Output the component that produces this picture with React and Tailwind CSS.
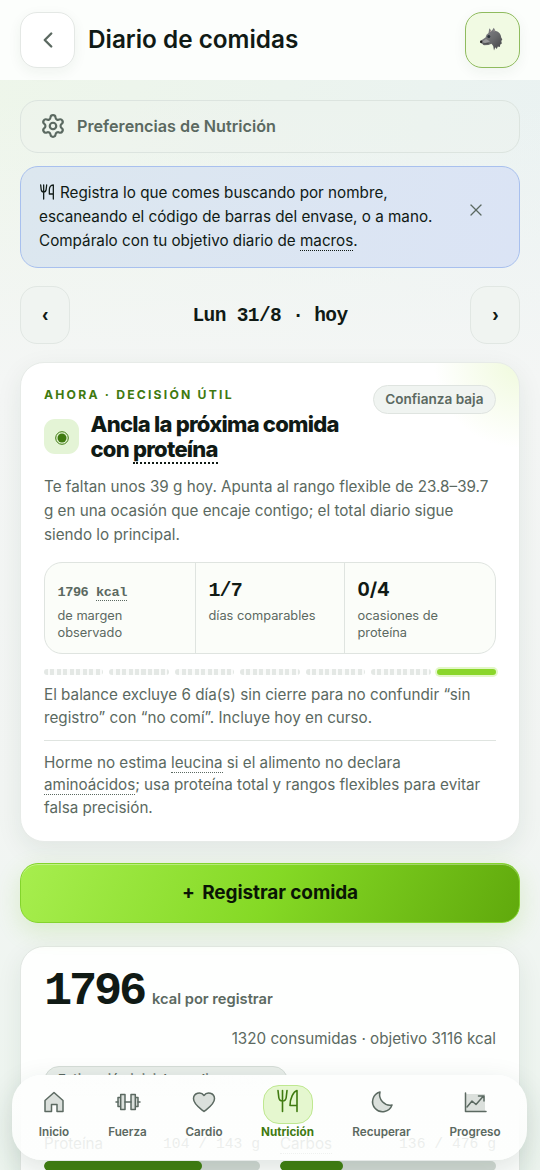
import React from 'react';
import clsx from 'clsx';
import { ChevronLeft, Settings, X } from 'lucide-react';

const MONO = "font-['Liberation_Mono',monospace]";

const WolfIcon = () => (
  <svg className="mr-[4px] mb-[2px]" width="24" height="24" viewBox="0 0 24 24">
    <defs>
      <linearGradient id="fur" x1="0" y1="0" x2="1" y2="1">
        <stop offset="0" stopColor="#8b8b91" />
        <stop offset=".55" stopColor="#68696c" />
        <stop offset="1" stopColor="#3f4042" />
      </linearGradient>
    </defs>
    <path d="M9.500 6 10.300 1.300 12.700 4 14.800.8 16.500 4C20 4.500 22 7.500 22.200 10.500L23.300 12.500 22.300 14 22.800 16.500 21.300 17.500 20.800 20 18.800 19.500 17.800 22 16.300 20.300 15 23.500 14.200 19 12.500 16.800 9.500 18 5 18.200 3 16.800 1.200 15.800 1.300 14 6.500 10.500 7.500 7.800Z" fill="url(#fur)" />
    <path d="M10.800 5 11.100 2.700 12.500 4.800zM14.500 4.300 15.100 2.200 15.700 4.500z" fill="#b0a0a0" />
    <path d="M7 12 2.800 14.800 6 16 11 14.500z" fill="#9a9a9c" />
    <circle cx="9.800" cy="9.600" r="1.500" fill="#28313a" />
    <circle cx="2.200" cy="14.800" r="1.200" fill="#222" />
    <path d="M4 17 9.500 16.500" stroke="#3b3b3d" strokeWidth=".7" />
  </svg>
);

// fork and knife, shared by the hint and the tab bar
const Cutlery = ({ className, sw, knife }) => (
  <svg className={className} viewBox="0 0 22 24" fill="none" stroke="currentColor" strokeWidth={sw} strokeLinecap="round" strokeLinejoin="round">
    <path d="M1.500 1.500 2.300 8.500c.3 2.300 1.700 3.500 3.700 3.500s3.400-1.200 3.700-3.500l.8-7M6 1.500V22.500" />
    <path d={knife} />
  </svg>
);

const StatCell = ({ label, children, last }) => (
  <div className={clsx('pl-[12.500px] pt-[14px] text-[12.800px] leading-[16.500px] text-[#5b6961]', !last && 'border-r border-[#dfe4e0]')}>
    <div className={clsx(MONO, 'h-[31px] font-bold leading-[28px]')}>{children}</div>
    <p className="whitespace-pre-line">{label}</p>
  </div>
);

const Term = ({ children }) => (
  <span className="border-b-2 border-dotted border-current">{children}</span>
);

const ThinTerm = ({ children }) => (
  <span className="border-b border-dotted border-current">{children}</span>
);

const tabs = [
  {
    label: 'Inicio',
    width: 'w-[84px]',
    icon: <path d="M3 10.500 12 2.500l9 8V21.500h-6v-7H9.500v7H3z" />,
  },
  {
    label: 'Fuerza',
    width: 'w-[63px]',
    icon: (
      <>
        <path d="M2 7.500H4.700v9H2zM22 7.500h-2.700v9H22z" />
        <path d="M4.700 4.500H9v15H4.700zM15 4.500h4.300v15H15z" />
        <path d="M9 12h6M0 12h2M22 12h2" />
      </>
    ),
  },
  {
    label: 'Cardio',
    width: 'w-[90px]',
    icon: <path d="M12 21.500C8 18.300 1.500 14.300 1.500 8.800 1.500 2.800 9 1.200 12 5.500c3-4.300 10.500-2.700 10.500 3.300 0 5.500-6.500 9.500-10.500 12.700z" />,
  },
  { label: 'Nutrición', width: 'w-[77px]', active: true },
  {
    label: 'Recuperar',
    width: 'w-[111px]',
    icon: <path d="M10 2A10 10 0 1 0 22 15 10.500 10.500 0 0 1 10 2z" />,
  },
  {
    label: 'Progreso',
    width: 'w-[76px]',
    icon: (
      <>
        <path d="M3 4h19v17H3z" stroke="none" />
        <path d="M2.500 3v18.500H23" fill="none" />
        <path d="m4 17 5-6 4 3.500L20.500 6M15.500 6H21v5" fill="none" />
      </>
    ),
  },
];

const TabBar = () => (
  <nav className="absolute left-[12px] top-[1075px] z-20 flex h-[85px] w-[515px] rounded-[30px] bg-[linear-gradient(180deg,rgba(253,254,253,1)_0%,rgba(253,254,253,0.98)_40%,rgba(253,254,253,0.88)_75%,rgba(253,254,253,0.93)_100%)] shadow-[0_10px_30px_rgba(30,60,40,0.14)]">
    {tabs.map((tab) => (
      <div key={tab.label} className={clsx(tab.width, 'flex flex-col items-center pt-[10px]')}>
        <div
          className={clsx(
            'flex h-[39px] w-[50px] items-center justify-center rounded-[16px]',
            tab.active ? 'border border-[#bfe890] bg-[#e5f7cf] text-[#3f7a10]' : 'pb-[6px] text-[#5b6961]'
          )}
        >
          {tab.active ? (
            <Cutlery className="mb-[7px] h-[24px] w-[23px]" sw={1.6} knife="M20.500 22.500V1.500C17 2.500 13.500 9 13.500 16.500h7" />
          ) : (
            <svg className="overflow-visible" width="24" height="24" viewBox="0 0 24 24" fill="#dbe0dc" stroke="currentColor" strokeWidth="1.5" strokeLinejoin="round" strokeLinecap="round">
              {tab.icon}
            </svg>
          )}
        </div>
        <span className={clsx('text-[11.700px] leading-[16px]', tab.active ? 'font-bold text-[#3f7a10]' : 'font-semibold text-[#5b6961]')}>
          {tab.label}
        </span>
      </div>
    ))}
  </nav>
);

const Header = () => (
  <header className="flex h-20 items-center bg-[#fcfefc] px-5">
    <button className="flex h-[56px] w-[55px] items-center justify-center rounded-[17px] border border-[#e4e8e5] bg-white shadow-[0_4px_14px_rgba(30,60,40,0.06)]">
      <ChevronLeft size={26} strokeWidth={2.2} className="text-[#5b6961]" />
    </button>
    <h1 className="mb-[1px] ml-[13px] text-[24.300px] font-semibold text-[#101a15]">Diario de comidas</h1>
    <button className="ml-auto flex h-[56px] w-[55px] items-center justify-center rounded-[17px] border border-[#8fbb5e] bg-[#f1fae3] shadow-[0_4px_14px_rgba(30,60,40,0.06)]">
      <WolfIcon />
    </button>
  </header>
);

const DecisionCard = () => (
  <section className="mt-[18px] h-[480px] rounded-[24px] border border-[#e7ebe8] bg-white bg-[radial-gradient(circle_at_100%_0%,#f0fadd_0px,rgba(255,255,255,0)_85px)] px-[23px] shadow-[0_8px_26px_rgba(30,60,40,0.08)]">
    <div className="flex h-[51px] justify-between pt-[22px]">
      <p className="pt-px text-[12.200px] font-bold leading-[18px] tracking-[2.200px] text-[#3f7a10]">AHORA · DECISIÓN ÚTIL</p>
      <span className="flex h-[29px] items-center rounded-full border border-[#dfe4e0] bg-[#f0f4f1] px-[11.500px] pb-px text-[13.600px] font-semibold text-[#5b6961]">
        Confianza baja
      </span>
    </div>
    <div className="-mt-[2px] flex items-center">
      <div className="-mt-px flex h-[35px] w-[35px] items-center justify-center rounded-[11px] bg-[#e4f4d6]">
        <svg className="mt-[3px]" width="14" height="14" viewBox="0 0 14 14">
          <circle cx="7" cy="7" r="6.300" fill="none" stroke="#3f7a10" strokeWidth="1" />
          <circle cx="7" cy="7" r="4.500" fill="#3f7a10" />
        </svg>
      </div>
      <h2 className="ml-[11.500px] text-[22px] font-extrabold leading-[25px] tracking-[-0.760px] text-[#101a15]">
        Ancla la próxima comida
        <br />
        con <Term>proteína</Term>
      </h2>
    </div>
    <p className="mt-[13px] whitespace-nowrap text-[15.220px] leading-[24px] text-[#5b6961]">
      Te faltan unos 39 g hoy. Apunta al rango flexible de 23.8–39.7
      <br />g en una ocasión que encaje contigo; el total diario sigue
      <br />
      siendo lo principal.
    </p>
    <div className="mt-[15px] grid h-[92px] grid-cols-[151px_149px_1fr] rounded-[18px] border border-[#dfe4e0] bg-[#fbfdf9]">
      <StatCell label={'de margen\nobservado'}>
        <span className="relative top-[2px] text-[13.600px] tracking-[-0.450px]">
          1796 <ThinTerm>kcal</ThinTerm>
        </span>
      </StatCell>
      <StatCell label="días comparables">
        <span className="text-[20px] tracking-[-0.900px] text-[#101a15]">1/7</span>
      </StatCell>
      <StatCell label={'ocasiones de\nproteína'} last>
        <span className="relative -top-px font-['Inter',sans-serif] text-[19px] tabular-nums text-[#101a15]">0/4</span>
      </StatCell>
    </div>
    <div className="mt-[15px] grid h-[6px] grid-cols-7 gap-[6px]">
      {[1, 2, 3, 4, 5, 6].map((day) => (
        <div key={day} className="rounded-full bg-[repeating-linear-gradient(90deg,#e4e8e5_0px,#e4e8e5_4px,#fafbfa_4px,#fafbfa_6.500px)]" />
      ))}
      <div className="rounded-full bg-[#8ad62a] shadow-[0_0_0_2px_#e3f7c8]" />
    </div>
    <p className="mt-[9px] whitespace-nowrap text-[15.220px] leading-[22.500px] text-[#5b6961]">
      El balance excluye 6 día(s) sin cierre para no confundir “sin
      <br />
      registro” con “no comí”. Incluye hoy en curso.
    </p>
    <p className="mt-[11px] whitespace-nowrap border-t border-[#dfe4e0] pt-[11px] text-[15.220px] leading-[22.300px] text-[#5b6961]">
      Horme no estima <ThinTerm>leucina</ThinTerm> si el alimento no declara
      <br />
      <ThinTerm>aminoácidos</ThinTerm>; usa proteína total y rangos flexibles para evitar
      <br />
      falsa precisión.
    </p>
  </section>
);

const Macro = ({ name, value, bar, className }) => (
  <div className={className}>
    <div className="flex h-[18px] justify-between text-[15.200px] leading-[18px] text-[#5b6961]">
      <span>{name}</span>
      <span className={clsx(MONO, 'text-[14.700px]')}>{value}</span>
    </div>
    <div className="mt-[8px] h-[10px] overflow-hidden rounded-full bg-[#d3dbd5]">
      <div className={clsx('h-full rounded-full bg-[#418010]', bar)} />
    </div>
  </div>
);

const SummaryCard = () => (
  <section className="mt-[23px] h-[300px] rounded-t-[24px] border border-[#e2e7e3] bg-[#fefffe] px-[23px] pt-[20px] shadow-[0_8px_26px_rgba(30,60,40,0.08)]">
    <div className="flex h-[50px] items-baseline text-[#5b6961]">
      <span className={clsx(MONO, 'w-[100px] whitespace-nowrap text-[47px] font-bold leading-[50px] tracking-[-3.200px] text-[#101a15]')}>1796</span>
      <span className="ml-[8px] text-[14.700px] font-semibold">kcal por registrar</span>
    </div>
    <p className="mt-[10px] text-right text-[15.220px] leading-[24px] text-[#5b6961]">1320 consumidas · objetivo 3116 kcal</p>
    <div className="mt-[15px] flex h-[30px] w-[244px] items-center justify-center rounded-full border border-[#d5ddd7] bg-[#e9eeea] pb-[2px] text-[13px] font-semibold text-[#5b6961]">
      Estimación inicial · media en curso
    </div>
    <div className="mt-[39px] flex">
      <Macro name="Proteína" value="104 / 143 g" bar="w-[158px]" className="w-[216px]" />
      <Macro name={<ThinTerm>Carbos</ThinTerm>} value="136 / 476 g" bar="w-[63px]" className="ml-[20px] w-[216px]" />
    </div>
  </section>
);

export default function App() {
  return (
    <div className="relative h-[1170px] w-[540px] overflow-hidden bg-[#f2f6f4] bg-[linear-gradient(100deg,#eef6ea_0%,#e9f1f4_100%)] font-['Inter',sans-serif]">
      <div className="h-full bg-[linear-gradient(180deg,rgba(245,247,245,0)_100px,#f4f6f5_380px,#f2f5f3_800px,#edf5ef_1170px)]">
        <Header />
        <main className="px-5 pt-5">
          <button className="flex h-[53px] w-full items-center gap-[11px] rounded-[18px] border border-[#dce4df] bg-[#edf2ee]/40 pb-px pl-[19px] text-[16.200px] font-semibold text-[#5b6961]">
            <Settings size={26} strokeWidth={2} />
            Preferencias de Nutrición
          </button>

          <div className="mt-[13px] flex h-[102px] justify-between rounded-[18px] border border-[#a8c0ee] bg-[linear-gradient(100deg,#dce7ef,#dbe4f5)] pl-[18px] pr-[36px] pt-[14px] text-[#101a15]">
            <p className="whitespace-nowrap text-[15.240px] leading-[24px]">
              <Cutlery className="mr-[5px] inline h-[16px] w-[16px] align-[-2px]" sw={1.9} knife="M20.500 22.500V1.500C16.500 1.500 14.500 4.500 14.500 9v6h6" />
              Registra lo que comes buscando por nombre,
              <br />
              escaneando el código de barras del envase, o a mano.
              <br />
              Compáralo con tu objetivo diario de <ThinTerm>macros</ThinTerm>.
            </p>
            <X size={20} strokeWidth={1.500} className="-mr-[3px] mt-[19px] text-[#5b6961]" />
          </div>

          <div className={clsx(MONO, 'mt-[18px] flex h-[58px] items-center justify-between text-[19.500px] font-bold tracking-[-0.630px] text-[#101a15]')}>
            <button className="h-[58px] w-[50px] rounded-[17px] border border-[#e1e7e3] bg-[#f0f4f1] pt-[3px]">‹</button>
            <span className="pt-[4px]">Lun 31/8 · hoy</span>
            <button className="h-[58px] w-[50px] rounded-[17px] border border-[#e1e7e3] bg-[#f0f4f1] pt-[3px]">›</button>
          </div>

          <DecisionCard />

          <button className="mt-[21px] h-[60px] w-full rounded-[18px] border border-[#83d42c] bg-[linear-gradient(115deg,#a7ee4e_0%,#85d925_50%,#60a90c_100%)] text-[19px] font-bold tracking-[-0.100px] text-[#0a1505] shadow-[inset_0_1px_0_rgba(255,255,255,0.35),0_8px_24px_rgba(120,200,40,0.2)]">
            <span className="mr-[3px]">+</span> Registrar comida
          </button>

          <SummaryCard />
        </main>
      </div>
      <TabBar />
    </div>
  );
}
